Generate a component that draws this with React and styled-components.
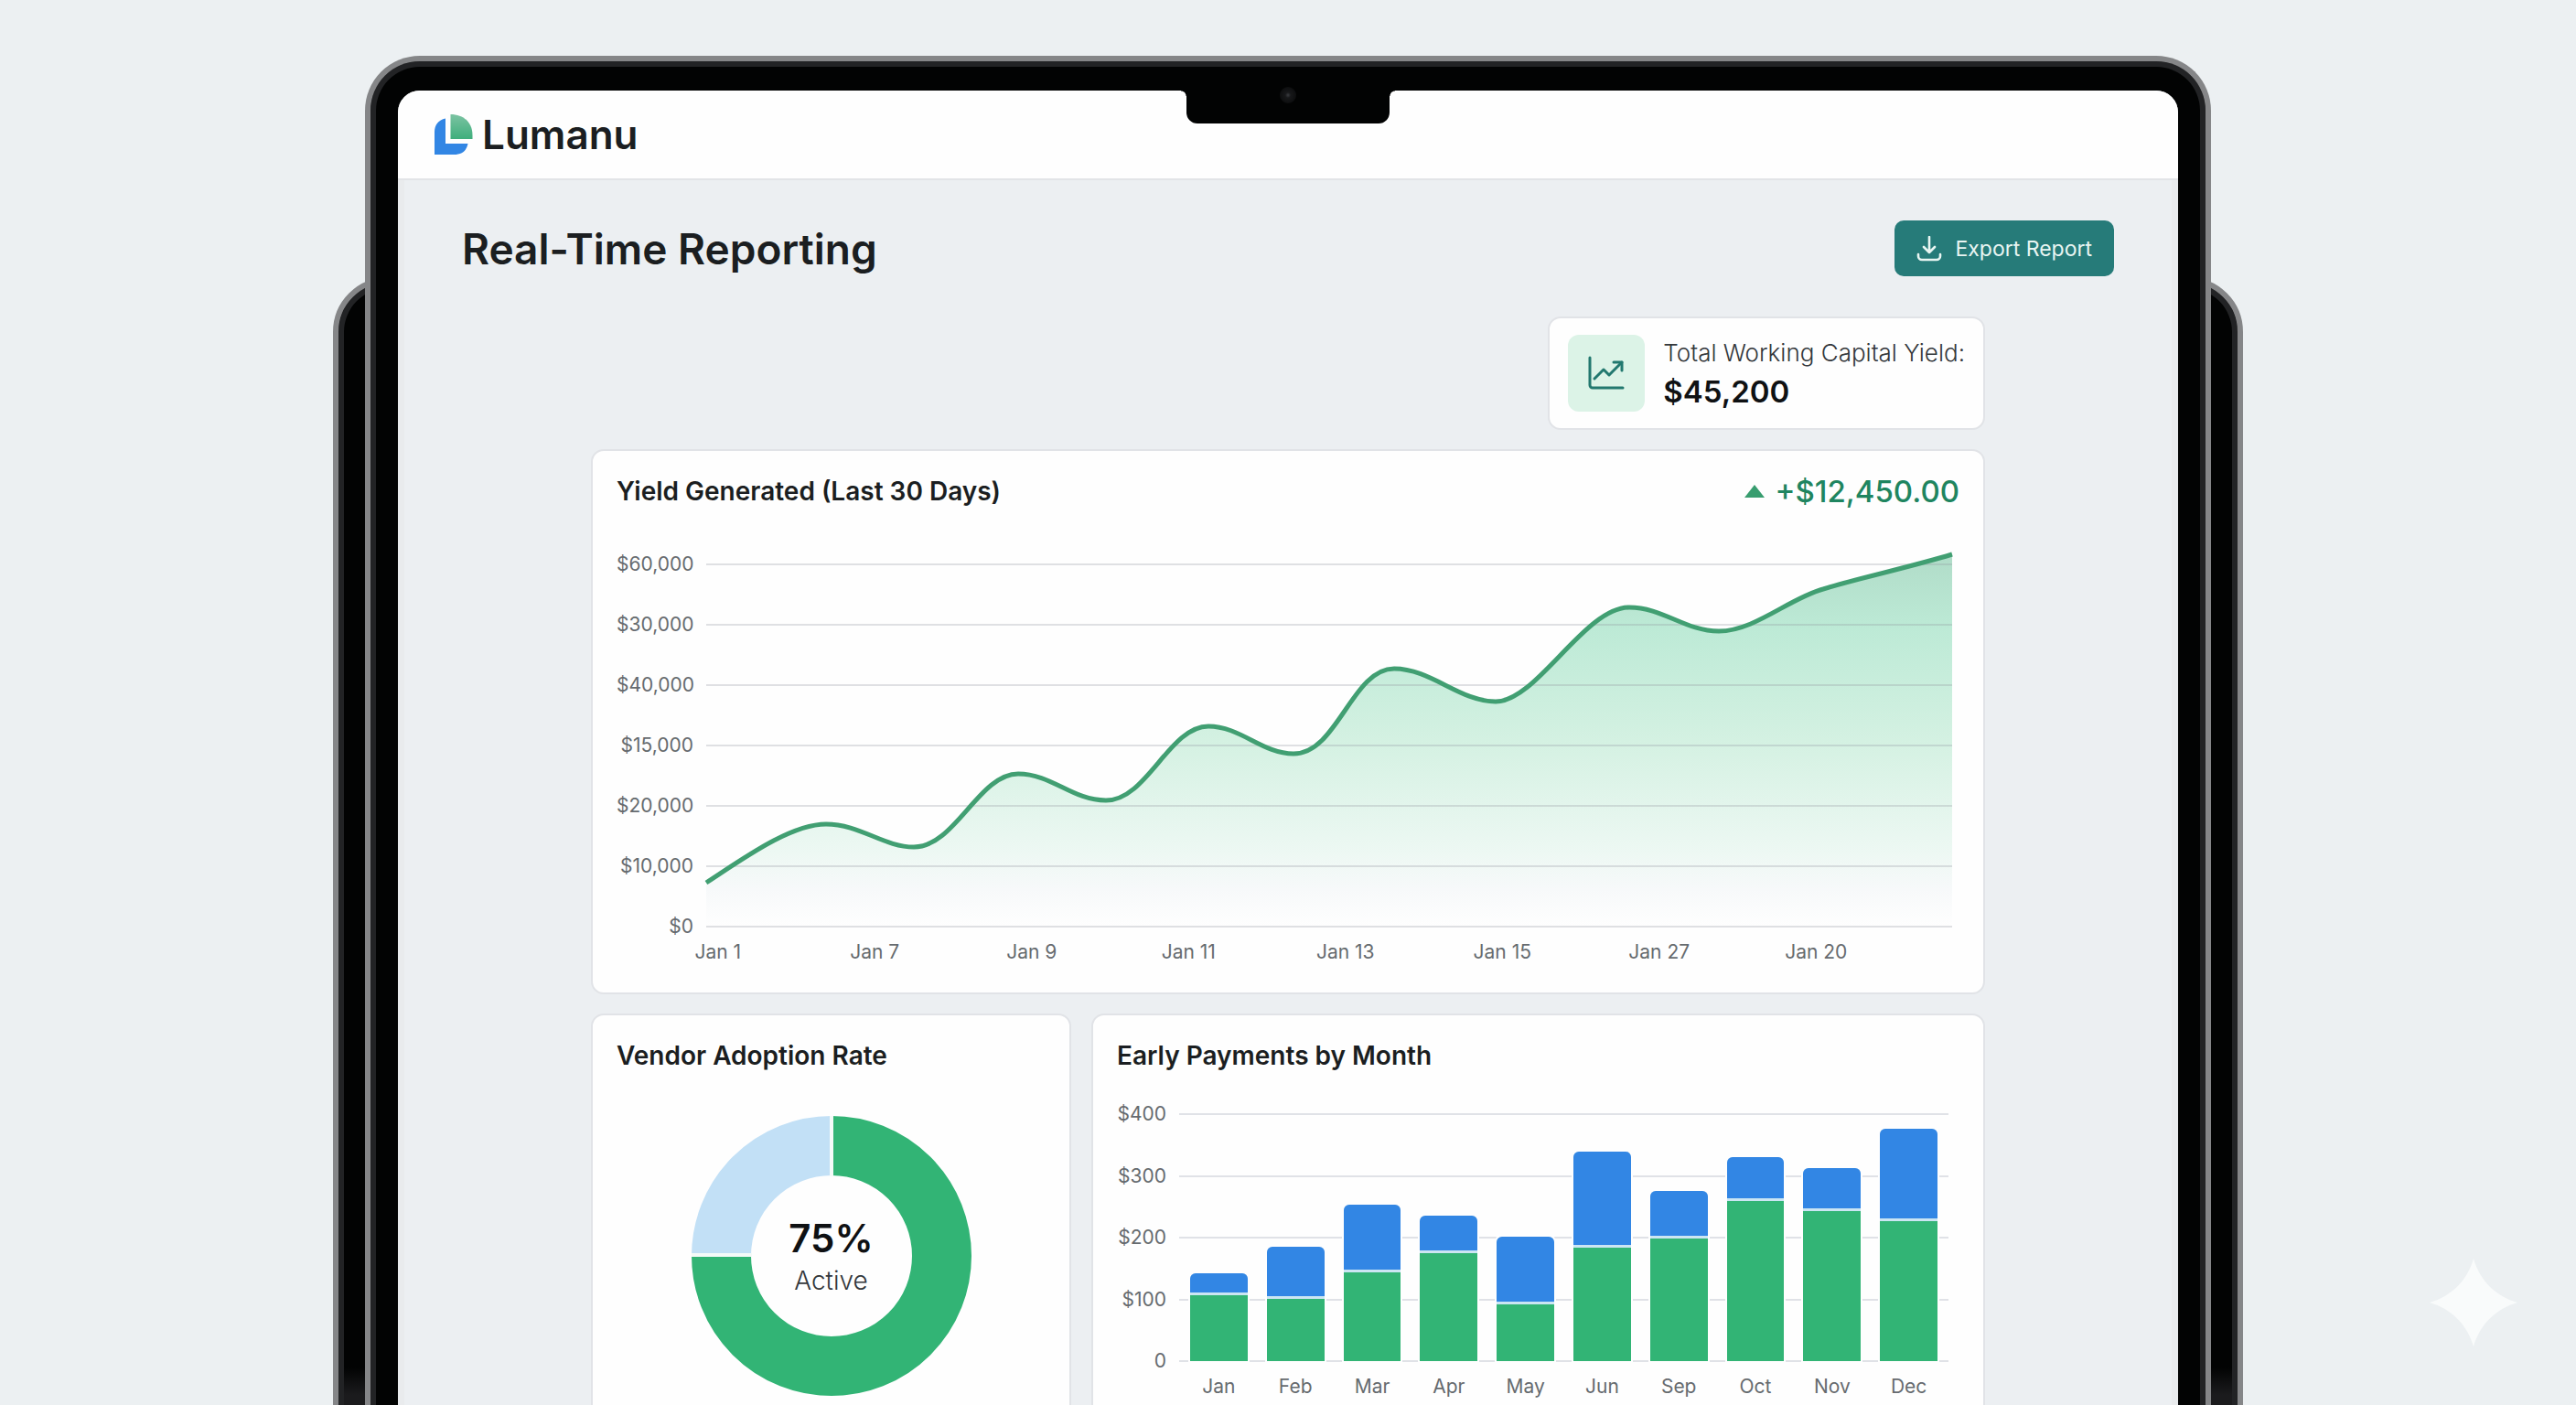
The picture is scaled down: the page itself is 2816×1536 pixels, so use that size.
import React from 'react';
import styled, { createGlobalStyle } from 'styled-components';

const GlobalStyle = createGlobalStyle`
  * {
    box-sizing: border-box;
  }

  body {
    margin: 0;
    background: #ecf0f2;
    color: #1b1e21;
    font-family: Inter, "Liberation Sans", sans-serif;
  }

  h1, h2, p, ul, ol {
    margin: 0;
    padding: 0;
    list-style: none;
  }
`;

const Stage = styled.div`
  position: relative;
  height: 100vh;
  overflow: hidden;
  padding: 61px 40px 0;
  display: grid;
  justify-items: center;
  align-items: start;
`;

const Shell = styled.div`
  grid-area: 1 / 1;
  width: 100%;
  border: solid #858688;
  border-width: 6px 6px 0;
  border-radius: 60px 60px 0 0;
  background: #020303;
  box-shadow: inset 0 0 0 6px #222325;
`;

const RearDevice = styled(Shell)`
  max-width: 2088px;
  margin-top: 242px;
  height: 1300px;
  border-bottom-width: 6px;
  border-radius: 60px;
  background: linear-gradient(#020303 1186px, #1b1b1d 1216px);
`;

const Device = styled(Shell)`
  max-width: 2018px;
  padding: 32px 30px 0;
`;

const Screen = styled.div`
  position: relative;
  border-radius: 24px 24px 0 0;
  background: #eceff2;
`;

const Notch = styled.div`
  position: absolute;
  top: 0;
  left: 50%;
  width: 222px;
  height: 36px;
  margin-left: -111px;
  border-radius: 0 0 12px 12px;
  background: #020303;

  &::before,
  &::after {
    content: '';
    position: absolute;
    top: 0;
    width: 6px;
    height: 6px;
  }

  &::before {
    left: -6px;
    background: radial-gradient(circle at 0 100%, transparent 5px, #020303 6px);
  }

  &::after {
    right: -6px;
    background: radial-gradient(circle at 100% 100%, transparent 5px, #020303 6px);
  }
`;

const Camera = styled.div`
  width: 18px;
  height: 18px;
  margin: -4px auto 0;
  border-radius: 50%;
  background: radial-gradient(#3a3c40 0, #17181a 3px, #0d0e0f 9px);
`;

const TopBar = styled.header`
  height: 98px;
  padding: 0 40px;
  display: flex;
  align-items: center;
  gap: 10px;
  border-bottom: 2px solid #e2e4e7;
  border-radius: 24px 24px 0 0;
  background: #fefefe;
`;

const Brand = styled.span`
  font-size: 44px;
  font-weight: 600;
  line-height: 56px;
`;

const Page = styled.main`
  padding: 44px 70px 60px;
  box-shadow: inset 8px 0 0 -1px #e9ebed, inset -8px 0 0 -1px #e9ebed;
`;

const TitleRow = styled.div`
  display: flex;
  align-items: center;
  justify-content: space-between;
  margin-bottom: 44px;
`;

const Title = styled.h1`
  font-size: 46px;
  font-weight: 600;
  line-height: 60px;
`;

const ExportButton = styled.button`
  height: 61px;
  padding: 0 24px;
  display: flex;
  align-items: center;
  gap: 14px;
  border: 0;
  border-radius: 10px;
  background: #267b79;
  color: #e8f5f2;
  font-family: inherit;
  font-size: 23px;
  cursor: pointer;
`;

const Dashboard = styled.div`
  max-width: 1524px;
  margin: 0 auto;
  display: flex;
  flex-direction: column;
  gap: 21px;
`;

const Panel = styled.section`
  border: 2px solid #e1e3e7;
  border-radius: 14px;
  background: #fefefe;
`;

const Kpi = styled(Panel)`
  align-self: flex-end;
  padding: 18px 20px;
  display: flex;
  align-items: center;
  gap: 20px;
`;

const KpiIcon = styled.div`
  width: 84px;
  height: 84px;
  display: grid;
  place-items: center;
  border-radius: 12px;
  background: #dcf3e7;
`;

const KpiLabel = styled.p`
  font-size: 26px;
  font-weight: 300;
  line-height: 40px;
  color: #33373b;
`;

const KpiValue = styled.p`
  font-size: 33px;
  font-weight: 600;
  line-height: 44px;
  color: #0f1113;
`;

const Card = styled(Panel)`
  padding: 24px 26px 30px;
`;

const CardHeader = styled.div`
  height: 40px;
  display: flex;
  align-items: center;
  justify-content: space-between;
`;

const CardTitle = styled.h2`
  font-size: 28px;
  font-weight: 600;
  line-height: 40px;
`;

const Delta = styled.p`
  display: flex;
  align-items: center;
  gap: 10px;
  font-size: 33px;
  font-weight: 500;
  line-height: 40px;
  color: #1f8560;
`;

const BottomRow = styled.div`
  display: grid;
  grid-template-columns: 525fr 977fr;
  gap: 22px;
`;

const Chart = styled.div`
  display: grid;
  grid-template-columns: ${props => props.axis}px 1fr;
  margin-top: ${props => props.top}px;
  padding-right: ${props => props.right}px;
`;

const AxisText = styled.li`
  font-size: 21px;
  line-height: 28px;
  color: #666b6f;
  text-align: center;
  white-space: nowrap;
`;

const YAxis = styled.ul`
  padding-right: 14px;
  display: flex;
  flex-direction: column;
  justify-content: space-between;

  ${AxisText} {
    text-align: right;
  }
`;

const Plot = styled.div`
  height: ${props => props.height}px;
  margin: 14px 0;
  display: grid;

  > * {
    grid-area: 1 / 1;
    min-height: 0;
  }
`;

const AreaSvg = styled.svg`
  width: 100%;
  height: 100%;
  overflow: visible;
`;

const Days = styled.ol`
  display: grid;
  grid-template-columns: repeat(8, 1fr);
  padding: 0 71px 0 25px;
`;

const Months = styled.ol`
  grid-column: 2;
  display: grid;
  grid-template-columns: repeat(10, 1fr);
  gap: 21px;
  padding: 0 12px;
`;

const GridLines = styled.div`
  display: flex;
  flex-direction: column;
  justify-content: space-between;
  margin: -1px 0;
`;

const GridLine = styled.div`
  height: 2px;
  background: #e0e2e7;
`;

const Bars = styled.div`
  display: grid;
  grid-template-columns: repeat(10, 1fr);
  gap: 21px;
  align-items: end;
  padding: 0 12px;
`;

const Bar = styled.div`
  display: flex;
  flex-direction: column;
  border-radius: 6px 6px 0 0;
  overflow: hidden;
  background: #cbe5f3;
  box-shadow: 0 0 0 2px #fefefe;
`;

const Early = styled.div`
  background: #3286e4;
  margin-bottom: 3px;
`;

const Standard = styled.div`
  flex: 1;
  background: #32b475;
`;

const Donut = styled.div`
  width: 306px;
  height: 306px;
  margin: 46px auto 0;
  display: grid;
  place-items: center;

  > * {
    grid-area: 1 / 1;
  }
`;

const DonutLabel = styled.div`
  padding-top: 6px;
  text-align: center;
`;

const DonutValue = styled.p`
  font-size: 42px;
  font-weight: 600;
  line-height: 48px;
  color: #0f1113;
`;

const DonutCaption = styled.p`
  font-size: 28px;
  font-weight: 300;
  line-height: 44px;
  color: #33373b;
`;

const Sparkle = styled.svg`
  position: absolute;
  right: 64px;
  bottom: 64px;
`;

const yieldTicks = ['$60,000', '$30,000', '$40,000', '$15,000', '$20,000', '$10,000', '$0'];
const yieldDays = ['Jan 1', 'Jan 7', 'Jan 9', 'Jan 11', 'Jan 13', 'Jan 15', 'Jan 27', 'Jan 20'];
const paymentTicks = ['$400', '$300', '$200', '$100', '0'];

const PAYMENT_MAX = 400;
const payments = [
  { month: 'Jan', standard: 106, total: 142 },
  { month: 'Feb', standard: 101, total: 185 },
  { month: 'Mar', standard: 144, total: 253 },
  { month: 'Apr', standard: 175, total: 235 },
  { month: 'May', standard: 92, total: 201 },
  { month: 'Jun', standard: 183, total: 340 },
  { month: 'Sep', standard: 198, total: 276 },
  { month: 'Oct', standard: 260, total: 330 },
  { month: 'Nov', standard: 243, total: 312 },
  { month: 'Dec', standard: 227, total: 376 },
];

const yieldCurve = [
  'M0 348',
  'C40 322 92 284 131 284',
  'C168 284 194 309 227 309',
  'C272 309 298 229 341 229',
  'C378 229 400 258 437 258',
  'C482 258 506 177 549 177',
  'C584 177 608 207 642 207',
  'C690 207 706 114 752 114',
  'C792 114 824 150 863 150',
  'C908 150 960 47 1009 47',
  'C1046 47 1070 73 1107 73',
  'C1146 73 1184 37 1221 27',
  'C1260 15 1316 3 1362 -11',
].join('');

const LogoMark = () => (
  <svg width="42" height="44" viewBox="0 0 42 44" aria-hidden="true">
    <defs>
      <linearGradient id="leaf" x1="0" y1="0" x2="0" y2="1">
        <stop offset="0" stopColor="#7cc3a2" />
        <stop offset="1" stopColor="#3fae7c" />
      </linearGradient>
    </defs>
    <path d="M0 44V19C0 12 4 6 12 4.5V32H36.5C35 40 30 44 21 44Z" fill="#3286e4" />
    <path d="M17.5 0C32 0 41.5 9 41.5 23V27H17.5Z" fill="url(#leaf)" />
  </svg>
);

const DownloadIcon = () => (
  <svg width="28" height="28" viewBox="0 0 28 28" fill="none" stroke="currentColor" strokeWidth="2.6" strokeLinecap="round" strokeLinejoin="round" aria-hidden="true">
    <path d="M14 1V18M8 12L14 18L20 12" />
    <path d="M2 20V22A4 4 0 0 0 6 26H22A4 4 0 0 0 26 22V20" />
  </svg>
);

const TrendIcon = () => (
  <svg width="40" height="38" viewBox="0 0 40 38" fill="none" stroke="#22786f" strokeWidth="3" strokeLinecap="round" strokeLinejoin="round" aria-hidden="true">
    <path d="M2 2V32A3 3 0 0 0 5 35H38" />
    <path d="M7 25L17 15L23 21L37 7" />
    <path d="M28 7H37V16" />
  </svg>
);

const YieldChart = () => (
  <>
    <Chart axis={98} top={46} right={8}>
      <YAxis>
        {yieldTicks.map(tick => <AxisText key={tick}>{tick}</AxisText>)}
      </YAxis>
      <Plot height={396}>
        <AreaSvg viewBox="0 0 1362 396" preserveAspectRatio="none" role="img" aria-label="Yield generated">
          <defs>
            <linearGradient id="area" gradientUnits="userSpaceOnUse" x1="0" y1="-11" x2="0" y2="396">
              <stop offset="0" stopColor="#b0dcc8" />
              <stop offset="0.2" stopColor="#bdead6" />
              <stop offset="0.5" stopColor="#d4f1e2" />
              <stop offset="0.8" stopColor="#edf8f3" />
              <stop offset="0.9" stopColor="#f7f9fa" />
              <stop offset="1" stopColor="#fefefe" />
            </linearGradient>
          </defs>
          <path d={`${yieldCurve}V396H0Z`} fill="url(#area)" />
          {yieldTicks.map((tick, i) => (
            <path key={tick} d={`M0 ${i * 66}H1362`} stroke="#8f959e" strokeOpacity="0.28" strokeWidth="2" />
          ))}
          <path d={yieldCurve} fill="none" stroke="#419f72" strokeWidth="5" vectorEffect="non-scaling-stroke" />
        </AreaSvg>
      </Plot>
    </Chart>
    <Days>
      {yieldDays.map(day => <AxisText key={day}>{day}</AxisText>)}
    </Days>
  </>
);

const PaymentsChart = () => (
  <Chart axis={68} top={30} right={12}>
    <YAxis>
      {paymentTicks.map(tick => <AxisText key={tick}>{tick}</AxisText>)}
    </YAxis>
    <Plot height={270}>
      <GridLines>
        {paymentTicks.map(tick => <GridLine key={tick} />)}
      </GridLines>
      <Bars>
        {payments.map(({ month, standard, total }) => (
          <Bar key={month} style={{ height: `${(total / PAYMENT_MAX) * 270}px` }}>
            <Early style={{ height: `${((total - standard) / PAYMENT_MAX) * 270 - 3}px` }} />
            <Standard />
          </Bar>
        ))}
      </Bars>
    </Plot>
    <Months>
      {payments.map(({ month }) => <AxisText key={month}>{month}</AxisText>)}
    </Months>
  </Chart>
);

const AdoptionDonut = () => (
  <Donut>
    <svg width="306" height="306" viewBox="0 0 306 306" fill="none" strokeWidth="65" role="img" aria-label="75% active">
      <path d="M153 32.5A120.5 120.5 0 1 1 32.5 153" stroke="#32b475" />
      <path d="M32.5 153A120.5 120.5 0 0 1 153 32.5" stroke="#c2e0f6" />
      <path d="M153 0V66M0 152H66" stroke="#f4faf8" strokeWidth="4" />
    </svg>
    <DonutLabel>
      <DonutValue>75%</DonutValue>
      <DonutCaption>Active</DonutCaption>
    </DonutLabel>
  </Donut>
);

const App = () => (
  <>
    <GlobalStyle />
    <Stage>
      <RearDevice />
      <Device>
        <Screen>
          <TopBar>
            <LogoMark />
            <Brand>Lumanu</Brand>
          </TopBar>
          <Notch><Camera /></Notch>
          <Page>
            <TitleRow>
              <Title>Real-Time Reporting</Title>
              <ExportButton type="button">
                <DownloadIcon />
                Export Report
              </ExportButton>
            </TitleRow>
            <Dashboard>
              <Kpi>
                <KpiIcon><TrendIcon /></KpiIcon>
                <div>
                  <KpiLabel>Total Working Capital Yield:</KpiLabel>
                  <KpiValue>$45,200</KpiValue>
                </div>
              </Kpi>
              <Card>
                <CardHeader>
                  <CardTitle>Yield Generated (Last 30 Days)</CardTitle>
                  <Delta>
                    <svg width="24" height="16" viewBox="0 0 24 16" aria-hidden="true">
                      <path d="M12 1L23 15H1Z" fill="#389d6f" />
                    </svg>
                    +$12,450.00
                  </Delta>
                </CardHeader>
                <YieldChart />
              </Card>
              <BottomRow>
                <Card>
                  <CardTitle>Vendor Adoption Rate</CardTitle>
                  <AdoptionDonut />
                </Card>
                <Card>
                  <CardTitle>Early Payments by Month</CardTitle>
                  <PaymentsChart />
                </Card>
              </BottomRow>
            </Dashboard>
          </Page>
        </Screen>
      </Device>
      <Sparkle width="96" height="96" viewBox="0 0 96 96" aria-hidden="true">
        <path d="M48 0C55 24 72 41 96 48C72 55 55 72 48 96C41 72 24 55 0 48C24 41 41 24 48 0Z" fill="#f9fbfb" />
      </Sparkle>
    </Stage>
  </>
);

export default App;
